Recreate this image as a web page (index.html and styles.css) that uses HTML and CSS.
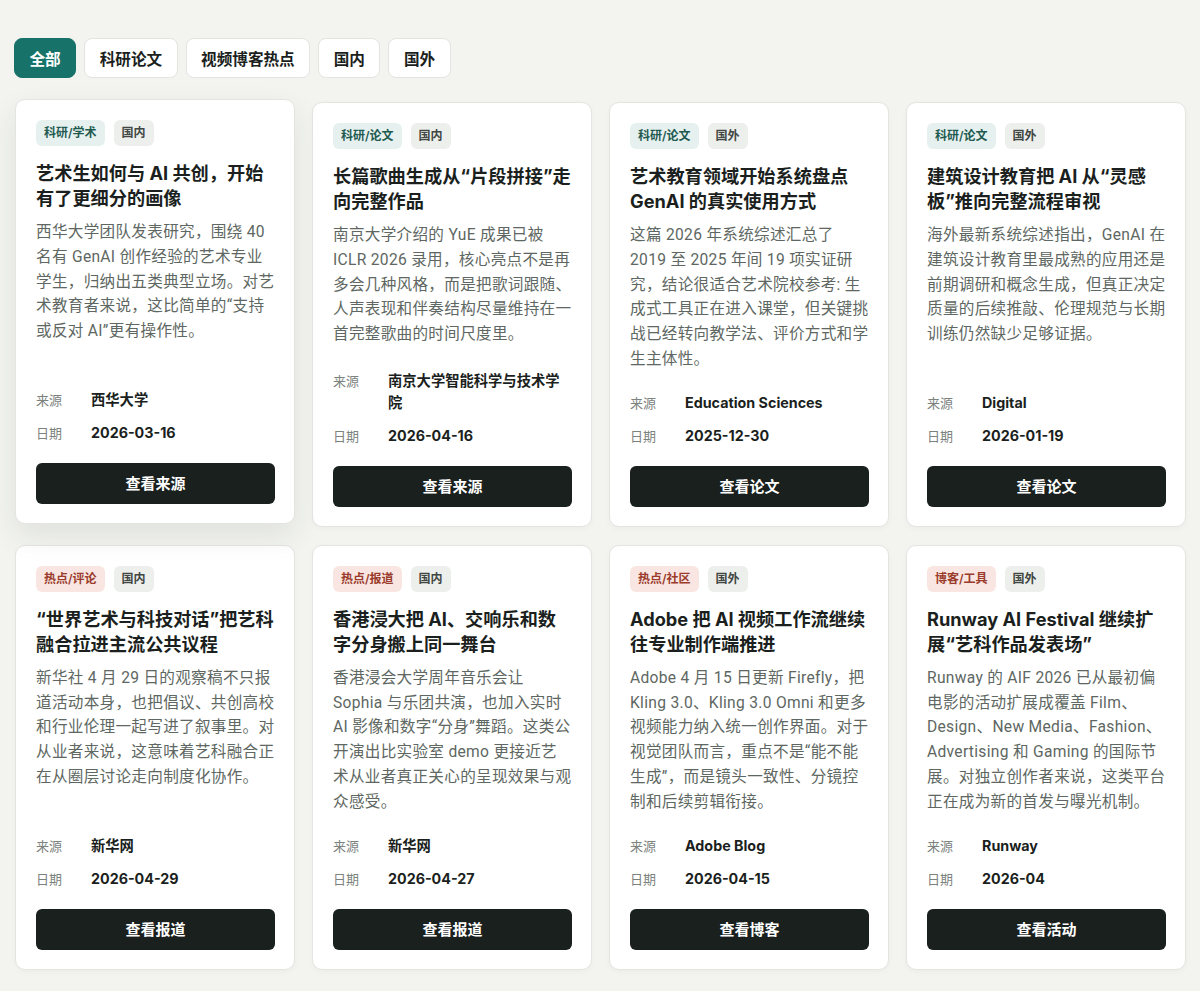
FILE: index.html
```html
<!DOCTYPE html>
<html lang="zh-CN">
<head>
  <meta charset="UTF-8" />
  <meta name="viewport" content="width=device-width, initial-scale=1.0"/>
  <title>艺科资讯</title>
  <link rel="stylesheet" href="styles.css">
</head>
<body>

  <main class="page">
    <!-- Category filters -->
    <nav class="filters">
      <button class="filter active">全部</button>
      <button class="filter">科研论文</button>
      <button class="filter">视频博客热点</button>
      <button class="filter">国内</button>
      <button class="filter">国外</button>
    </nav>

    <!-- News cards -->
    <section class="grid">
      <article class="card lifted">
        <div class="tags"><span class="tag tag-research">科研/学术</span><span class="tag">国内</span></div>
        <h3 class="card-title">艺术生如何与 AI 共创，开始有了更细分的画像</h3>
        <p class="card-desc">西华大学团队发表研究，围绕 40 名有 GenAI 创作经验的艺术专业学生，归纳出五类典型立场。对艺术教育者来说，这比简单的“支持或反对 AI”更有操作性。</p>
        <dl class="meta">
          <dt>来源</dt><dd>西华大学</dd>
          <dt>日期</dt><dd>2026-03-16</dd>
        </dl>
        <a class="card-btn" href="#">查看来源</a>
      </article>

      <article class="card">
        <div class="tags"><span class="tag tag-research">科研/论文</span><span class="tag">国内</span></div>
        <h3 class="card-title">长篇歌曲生成从“片段拼接”走向完整作品</h3>
        <p class="card-desc">南京大学介绍的 YuE 成果已被 ICLR 2026 录用，核心亮点不是再多会几种风格，而是把歌词跟随、人声表现和伴奏结构尽量维持在一首完整歌曲的时间尺度里。</p>
        <dl class="meta">
          <dt>来源</dt><dd>南京大学智能科学与技术学院</dd>
          <dt>日期</dt><dd>2026-04-16</dd>
        </dl>
        <a class="card-btn" href="#">查看来源</a>
      </article>

      <article class="card">
        <div class="tags"><span class="tag tag-research">科研/论文</span><span class="tag">国外</span></div>
        <h3 class="card-title">艺术教育领域开始系统盘点 GenAI 的真实使用方式</h3>
        <p class="card-desc">这篇 2026 年系统综述汇总了 2019 至 2025 年间 19 项实证研究，结论很适合艺术院校参考: 生成式工具正在进入课堂，但关键挑战已经转向教学法、评价方式和学生主体性。</p>
        <dl class="meta">
          <dt>来源</dt><dd>Education Sciences</dd>
          <dt>日期</dt><dd>2025-12-30</dd>
        </dl>
        <a class="card-btn" href="#">查看论文</a>
      </article>

      <article class="card">
        <div class="tags"><span class="tag tag-research">科研/论文</span><span class="tag">国外</span></div>
        <h3 class="card-title">建筑设计教育把 AI 从“灵感板”推向完整流程审视</h3>
        <p class="card-desc">海外最新系统综述指出，GenAI 在建筑设计教育里最成熟的应用还是前期调研和概念生成，但真正决定质量的后续推敲、伦理规范与长期训练仍然缺少足够证据。</p>
        <dl class="meta">
          <dt>来源</dt><dd>Digital</dd>
          <dt>日期</dt><dd>2026-01-19</dd>
        </dl>
        <a class="card-btn" href="#">查看论文</a>
      </article>

      <article class="card">
        <div class="tags"><span class="tag tag-hot">热点/评论</span><span class="tag">国内</span></div>
        <h3 class="card-title">“世界艺术与科技对话”把艺科融合拉进主流公共议程</h3>
        <p class="card-desc">新华社 4 月 29 日的观察稿不只报道活动本身，也把倡议、共创高校和行业伦理一起写进了叙事里。对从业者来说，这意味着艺科融合正在从圈层讨论走向制度化协作。</p>
        <dl class="meta">
          <dt>来源</dt><dd>新华网</dd>
          <dt>日期</dt><dd>2026-04-29</dd>
        </dl>
        <a class="card-btn" href="#">查看报道</a>
      </article>

      <article class="card">
        <div class="tags"><span class="tag tag-hot">热点/报道</span><span class="tag">国内</span></div>
        <h3 class="card-title">香港浸大把 AI、交响乐和数字分身搬上同一舞台</h3>
        <p class="card-desc">香港浸会大学周年音乐会让 Sophia 与乐团共演，也加入实时 AI 影像和数字“分身”舞蹈。这类公开演出比实验室 demo 更接近艺术从业者真正关心的呈现效果与观众感受。</p>
        <dl class="meta">
          <dt>来源</dt><dd>新华网</dd>
          <dt>日期</dt><dd>2026-04-27</dd>
        </dl>
        <a class="card-btn" href="#">查看报道</a>
      </article>

      <article class="card">
        <div class="tags"><span class="tag tag-hot">热点/社区</span><span class="tag">国外</span></div>
        <h3 class="card-title">Adobe 把 AI 视频工作流继续往专业制作端推进</h3>
        <p class="card-desc">Adobe 4 月 15 日更新 Firefly，把 Kling 3.0、Kling 3.0 Omni 和更多视频能力纳入统一创作界面。对于视觉团队而言，重点不是“能不能生成”，而是镜头一致性、分镜控制和后续剪辑衔接。</p>
        <dl class="meta">
          <dt>来源</dt><dd>Adobe Blog</dd>
          <dt>日期</dt><dd>2026-04-15</dd>
        </dl>
        <a class="card-btn" href="#">查看博客</a>
      </article>

      <article class="card">
        <div class="tags"><span class="tag tag-hot">博客/工具</span><span class="tag">国外</span></div>
        <h3 class="card-title">Runway AI Festival 继续扩展“艺科作品发表场”</h3>
        <p class="card-desc">Runway 的 AIF 2026 已从最初偏电影的活动扩展成覆盖 Film、Design、New Media、Fashion、Advertising 和 Gaming 的国际节展。对独立创作者来说，这类平台正在成为新的首发与曝光机制。</p>
        <dl class="meta">
          <dt>来源</dt><dd>Runway</dd>
          <dt>日期</dt><dd>2026-04</dd>
        </dl>
        <a class="card-btn" href="#">查看活动</a>
      </article>
    </section>
  </main>

</body>
</html>
```

FILE: styles.css
```css
body {
  margin: 0;
  font-family: Inter, "Noto Sans CJK SC", sans-serif;
  background: #f3f4f0;
  color: #1b1f1d;
}

.page {
  padding: 38px 14px 40px 15px;
}

/* filter bar */
.filters {
  display: flex;
  gap: 8px;
  margin-left: -1px;
  margin-bottom: 24px;
}

.filter {
  height: 40px;
  padding: 0 14.5px;
  border: 1px solid #e3e5e0;
  border-radius: 8px;
  background: #fff;
  font-family: inherit;
  font-size: 15.6px;
  font-weight: 700;
  color: #1b1f1d;
  cursor: pointer;
}

.filter.active {
  background: #17736a;
  border-color: #17736a;
  color: #fff;
}

/* cards */
.grid {
  display: grid;
  grid-template-columns: repeat(4, 1fr);
  gap: 18px 17px;
}

.card {
  display: flex;
  flex-direction: column;
  background: #fff;
  border: 1px solid #e3e5e1;
  border-radius: 10px;
  padding: 20px 19px 19px 20px;
  box-shadow: 0 2px 6px rgba(30, 40, 35, 0.03);
}

.card.lifted {
  transform: translateY(-3px);
  box-shadow: 0 12px 30px rgba(30, 45, 38, 0.09);
}

.tags {
  display: flex;
  gap: 9px;
}

.tag {
  height: 26px;
  line-height: 26px;
  padding: 0 8px;
  border-radius: 6px;
  background: #edefec;
  color: #414744;
  font-size: 12px;
  font-weight: 600;
}

.tag-research {
  background: #e6f1ef;
  color: #1f5a51;
}

.tag-hot {
  background: #f9e6e2;
  color: #9a3b2c;
}

.card-title {
  margin: 15px 0 0;
  font-size: 18.2px;
  line-height: 25px;
  font-weight: 700;
  color: #1b1f1d;
}

/* body copy: Roboto keeps latin words compact next to CJK */
.card-desc {
  margin: 9px 0 0;
  font-family: Roboto, "Noto Sans CJK SC", sans-serif;
  font-size: 15.6px;
  line-height: 24.8px;
  letter-spacing: 0.3px;
  color: #5e6762;
}

.meta {
  display: grid;
  grid-template-columns: 55px 1fr;
  row-gap: 11px;
  margin: auto 0 0;
  padding-top: 20px;
}

.meta dt {
  font-size: 13px;
  line-height: 22px;
  color: #7c827e;
}

.meta dd {
  margin: 0;
  font-size: 14.3px;
  line-height: 22px;
  font-weight: 700;
  color: #1b1f1d;
}

.card-btn {
  display: block;
  margin-top: 19px;
  height: 41px;
  line-height: 41px;
  border-radius: 6px;
  background: #1a201e;
  color: #fff;
  text-align: center;
  text-decoration: none;
  font-size: 15px;
  font-weight: 700;
}
```
